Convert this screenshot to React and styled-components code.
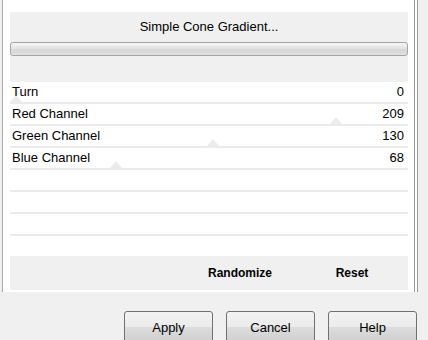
import React from "react";
import styled, { createGlobalStyle } from "styled-components";

const GlobalStyle = createGlobalStyle`
  html, body {
    margin: 0;
    padding: 0;
    background: #f0f0f0;
    font-family: "Liberation Sans", Arial, sans-serif;
  }
`;

const Page = styled.div`
  width: 428px;
  height: 340px;
  overflow: hidden;
  background: #f0f0f0;
`;

const Frame = styled.div`
  margin-left: 2px;
  width: 398px;
  height: 278px;
  padding: 12px 6px 2px 7px;
  background: #fff;
  border-left: 1px solid #a8a8a8;
  border-right: 4px double #9a9a9a;
  display: flex;
  flex-direction: column;
`;

const Header = styled.div`
  background: #f0f0f0;
  height: 70px;
  box-sizing: border-box;
  padding-top: 7px;
  display: flex;
  flex-direction: column;
`;

const Title = styled.div`
  font-size: 13px;
  line-height: 16px;
  color: #000;
  text-align: center;
`;

const Track = styled.div`
  margin-top: 7px;
  height: 14px;
  box-sizing: border-box;
  border: 1px solid #a4a4a4;
  border-radius: 3px;
  background: linear-gradient(
    to bottom,
    #f6f6f6 0%,
    #e6e6e6 40%,
    #d6d6d6 60%,
    #e2e2e2 100%
  );
`;

const List = styled.div`
  display: flex;
  flex-direction: column;
`;

const Row = styled.div`
  position: relative;
  height: 20px;
  display: flex;
  align-items: center;
  justify-content: space-between;
  padding: 0 4px 0 2px;
  font-size: 13px;
  line-height: 20px;
  color: #000;
  border-bottom: ${(p) => (p.$last ? "none" : "2px solid #ebebeb")};
`;

const Label = styled.span`
  position: relative;
  z-index: 1;
`;

const Value = styled.span`
  position: relative;
  z-index: 1;
`;

const Thumb = styled.div`
  position: absolute;
  bottom: 0;
  width: 0;
  height: 0;
  border-left: 6px solid transparent;
  border-right: 6px solid transparent;
  border-bottom: 7px solid #ececec;
`;

const ActionBar = styled.div`
  height: 34px;
  background: #f0f0f0;
  display: flex;
  justify-content: flex-end;
  align-items: center;
`;

const Action = styled.div`
  width: 112px;
  text-align: center;
  font-size: 12px;
  font-weight: bold;
  color: #000;
`;

const Footer = styled.div`
  display: flex;
  justify-content: flex-end;
  gap: 13px;
  padding: 19px 11px 0 0;
`;

const Button = styled.button`
  width: 89px;
  height: 32px;
  border: 1px solid #707070;
  border-radius: 3px;
  background: linear-gradient(
    to bottom,
    #f2f2f2 0%,
    #ebebeb 50%,
    #dddddd 51%,
    #cfcfcf 100%
  );
  font-family: "Liberation Sans", Arial, sans-serif;
  font-size: 13px;
  color: #000;
  padding: 0;
`;

const channels = [
  { name: "Turn", value: 0, max: 360 },
  { name: "Red Channel", value: 209, max: 255 },
  { name: "Green Channel", value: 130, max: 255 },
  { name: "Blue Channel", value: 68, max: 255 },
];

const TRACK_W = 398;

export default function App() {
  const empties = [0, 1, 2, 3];
  return (
    <>
      <GlobalStyle />
      <Page>
        <Frame>
          <Header>
            <Title>Simple Cone Gradient...</Title>
            <Track />
          </Header>
          <List>
            {channels.map((c) => {
              const center = (c.value / c.max) * TRACK_W;
              return (
                <Row key={c.name}>
                  <Thumb style={{ left: Math.max(0, center - 6) }} />
                  <Label>{c.name}</Label>
                  <Value>{c.value}</Value>
                </Row>
              );
            })}
            {empties.map((i) => (
              <Row key={"e" + i} $last={i === empties.length - 1} />
            ))}
          </List>
          <ActionBar>
            <Action>Randomize</Action>
            <Action>Reset</Action>
          </ActionBar>
        </Frame>
        <Footer>
          <Button>Apply</Button>
          <Button>Cancel</Button>
          <Button>Help</Button>
        </Footer>
      </Page>
    </>
  );
}
